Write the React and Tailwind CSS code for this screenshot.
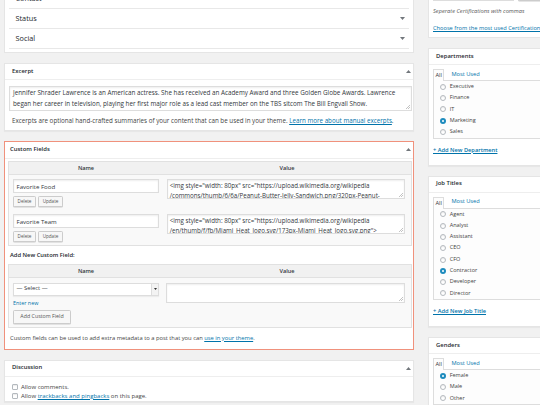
import React from "react";

// ---------- UTILS ----------
function cn(...classes) {
  return classes.filter(Boolean).join(" ");
}

// ---------- SMALL PIECES ----------
function Caret({ up }) {
  return (
    <svg width="5" height="3" viewBox="0 0 5 3" className="shrink-0">
      <path d={up ? "M0 3L2.5 0L5 3Z" : "M0 0L5 0L2.5 3Z"} fill="#72777c" />
    </svg>
  );
}

function Grip() {
  return (
    <svg className="absolute right-[1px] bottom-[1px]" width="5" height="5" viewBox="0 0 5 5">
      <path d="M5 1L1 5M5 3L3 5" stroke="#9a9a9a" strokeWidth="0.6" />
    </svg>
  );
}

function Radio({ checked }) {
  if (checked) {
    return (
      <span className="w-[6px] h-[6px] rounded-full bg-[#1e8cbe] flex items-center justify-center shrink-0">
        <span className="w-[2px] h-[2px] rounded-full bg-white" />
      </span>
    );
  }
  return (
    <span className="w-[6px] h-[6px] rounded-full border-[0.75px] border-[#b4b9be] bg-white shadow-[inset_0_1px_1px_rgba(0,0,0,0.08)] shrink-0" />
  );
}

function Checkbox() {
  return (
    <span className="w-[6px] h-[6px] rounded-[1px] border-[0.75px] border-[#b4b9be] bg-white shadow-[inset_0_1px_1px_rgba(0,0,0,0.08)] shrink-0" />
  );
}

function SmallButton({ className, children }) {
  return (
    <span
      className={cn(
        "flex items-center justify-center bg-[#f7f7f7] border-[0.75px] border-[#cccccc] rounded-[1.5px] shadow-[0_0.5px_0_#ccc] text-[#555] whitespace-nowrap",
        className
      )}
    >
      {children}
    </span>
  );
}

function Postbox({ title, className, headerClass, toggle = true, children }) {
  return (
    <div className={cn("bg-white border border-[#e5e5e5] shadow-[0_1px_1px_rgba(0,0,0,0.04)]", className)}>
      <div className={cn("h-[16px] border-b border-[#eeeeee] flex items-center justify-between pl-[7px] pr-[2px]", headerClass)}>
        <span className="text-[5.9px] font-semibold text-[#23282d] leading-none">{title}</span>
        {toggle && <Caret up />}
      </div>
      {children}
    </div>
  );
}

function TaxBox({ title, items, checked, addLabel }) {
  return (
    <Postbox title={title} toggle={false}>
      <div className="px-[4px] pt-[3px] pb-[10px]">
        <div className="flex items-end h-[12px]">
          <div className="relative top-px z-10 h-[12px] px-[1.5px] border-[0.75px] border-b-0 border-[#dddddd] bg-[#fdfdfd] text-[5.7px] leading-[11px] text-[#32373c]">
            All
          </div>
          <span className="ml-[7px] text-[5.7px] leading-[11px] text-[#0073aa] self-center">Most Used</span>
        </div>
        <div className="border-[0.75px] border-[#dddddd] bg-[#fdfdfd]">
          {items.map((it) => (
            <div key={it} className="h-[11.3px] flex items-center pl-[6px] gap-[3.7px]">
              <Radio checked={it === checked} />
              <span className="text-[5.5px] text-[#444] leading-none whitespace-nowrap">{it}</span>
            </div>
          ))}
        </div>
        <div className="mt-[7px] leading-[9px] text-[5.7px] font-semibold text-[#0073aa] underline whitespace-nowrap">
          {addLabel}
        </div>
      </div>
    </Postbox>
  );
}

// ---------- CUSTOM FIELD ROW ----------
function FieldRow({ name, lines }) {
  return (
    <div className="flex h-[35px] pt-[4px]">
      <div className="w-[154px] pl-[4px] shrink-0">
        <div className="h-[14px] w-[146px] bg-white border-[0.75px] border-[#dddddd] shadow-[inset_0_1px_2px_rgba(0,0,0,0.07)] text-[6.1px] text-[#32373c] leading-[13px] pl-[2.5px]">
          {name}
        </div>
        <div className="flex gap-[2px] mt-[3px]">
          <SmallButton className="w-[23px] h-[11px] text-[4.6px]">Delete</SmallButton>
          <SmallButton className="w-[25px] h-[11px] text-[4.6px]">Update</SmallButton>
        </div>
      </div>
      <div className="flex-1 pl-[3.7px] pr-[5.7px]">
        <div className="relative h-[20px] bg-white border-[0.75px] border-[#dddddd] shadow-[inset_0_1px_2px_rgba(0,0,0,0.07)] overflow-hidden pl-[2px] pt-[1px] text-[6.2px] leading-[10px] text-[#32373c]">
          {lines.map((l, i) => (
            <div key={i} className="whitespace-nowrap">{l}</div>
          ))}
          <Grip />
        </div>
      </div>
    </div>
  );
}

// ---------- MAIN ----------
export default function App() {
  return (
    <div className="w-[540px] h-[405px] overflow-hidden bg-[#f1f1f1] flex pl-[4px] font-['Open_Sans','Liberation_Sans',sans-serif] text-[#444]">
      {/* Left column */}
      <div className="w-[410px] shrink-0 flex flex-col gap-[10px]">
        {/* Accordion box */}
        <div className="-mt-[17px] bg-white border border-[#e5e5e5] px-[4px] pt-[4px] pb-[3px]">
          <div className="border-b border-[#e8e8e8]">
            {["Contact", "Status", "Social"].map((r) => (
              <div key={r} className="h-[20px] border-t border-[#e8e8e8] flex items-center justify-between pl-[6.5px] pr-[4px]">
                <span className="text-[7.3px] text-[#23282d] leading-none">{r}</span>
                <Caret />
              </div>
            ))}
          </div>
        </div>

        {/* Excerpt */}
        <Postbox title="Excerpt" headerClass="h-[15px]" className="pb-[5px]">
          <div className="pl-[4px] pr-[1px]">
            <div className="relative mt-[6px] h-[25px] bg-white border-[0.75px] border-[#dddddd] shadow-[inset_0_1px_2px_rgba(0,0,0,0.07)] pl-[3px] text-[6.3px] leading-[11.3px] text-[#32373c] overflow-hidden">
              <div className="whitespace-nowrap">
                Jennifer Shrader Lawrence is an American actress. She has received an Academy Award and three Golden Globe Awards. Lawrence
              </div>
              <div className="whitespace-nowrap">
                began her career in television, playing her first major role as a lead cast member on the TBS sitcom The Bill Engvall Show.
              </div>
              <Grip />
            </div>
            <p className="mt-[6px] text-[6.25px] leading-[8px] whitespace-nowrap pl-[3px]">
              Excerpts are optional hand-crafted summaries of your content that can be used in your theme.{" "}
              <span className="text-[#0073aa] underline">Learn more about manual excerpts</span>.
            </p>
          </div>
        </Postbox>

        {/* Custom Fields */}
        <div className="bg-white border border-[#f0917c] pb-[7px]">
          <div className="h-[16.5px] border-b border-[#eeeeee] flex items-center justify-between pl-[5px] pr-[2px]">
            <span className="text-[5.9px] font-semibold text-[#23282d] leading-none">Custom Fields</span>
            <Caret up />
          </div>
          <div className="ml-[3px] mr-[1px] mt-[2px] border-[0.75px] border-[#e1e1e1] bg-[#f9f9f9]">
            <div className="flex h-[13px] bg-[#f1f1f1] border-b-[0.75px] border-[#e1e1e1] text-[5.6px] font-semibold text-[#32373c] leading-[12px]">
              <div className="w-[154px] text-center shrink-0">Name</div>
              <div className="flex-1 text-center">Value</div>
            </div>
            <FieldRow
              name="Favorite Food"
              lines={[
                '<img style="width: 80px" src="https://upload.wikimedia.org/wikipedia',
                "/commons/thumb/6/6a/Peanut-Butter-Jelly-Sandwich.png/320px-Peanut-",
              ]}
            />
            <FieldRow
              name="Favorite Team"
              lines={[
                '<img style="width: 80px" src="https://upload.wikimedia.org/wikipedia',
                '/en/thumb/f/fb/Miami_Heat_logo.svg/173px-Miami_Heat_logo.svg.png">',
              ]}
            />
          </div>

          <div className="pl-[5px] mt-[5px] text-[5.8px] font-semibold text-[#23282d] leading-[9px]">
            Add New Custom Field:
          </div>

          <div className="ml-[3px] mr-[1px] mt-[4px] border-[0.75px] border-[#e1e1e1] bg-[#f9f9f9]">
            <div className="flex h-[13px] bg-[#f1f1f1] border-b-[0.75px] border-[#e1e1e1] text-[5.6px] font-semibold text-[#32373c] leading-[12px]">
              <div className="w-[154px] text-center shrink-0">Name</div>
              <div className="flex-1 text-center">Value</div>
            </div>
            <div className="flex pt-[5px] pb-[3.5px]">
              <div className="w-[154px] pl-[4px] shrink-0">
                <div className="h-[13px] w-[146px] bg-white border-[0.75px] border-[#dddddd] shadow-[0_1px_1px_rgba(0,0,0,0.05)] flex items-center justify-between">
                  <span className="pl-[2.5px] text-[5.9px] text-[#32373c] leading-none">— Select —</span>
                  <span className="h-full w-[7px] border-l-[0.75px] border-[#dddddd] bg-[#f3f3f3] flex items-center justify-center">
                    <svg width="3" height="2" viewBox="0 0 3 2">
                      <path d="M0 0L3 0L1.5 2Z" fill="#333" />
                    </svg>
                  </span>
                </div>
                <div className="mt-[3px] text-[5.4px] leading-[8px] text-[#0073aa]">Enter new</div>
                <SmallButton className="mt-[3.5px] w-[58px] h-[13.5px] text-[5.3px]">Add Custom Field</SmallButton>
              </div>
              <div className="flex-1 pl-[3px] pr-[5.7px]">
                <div className="relative h-[20.5px] bg-white border-[0.75px] border-[#dddddd] shadow-[inset_0_1px_2px_rgba(0,0,0,0.07)]">
                  <Grip />
                </div>
              </div>
            </div>
          </div>

          <p className="pl-[5px] mt-[5.5px] text-[5.8px] leading-[8px] whitespace-nowrap">
            Custom fields can be used to add extra metadata to a post that you can{" "}
            <span className="text-[#0073aa] underline">use in your theme</span>.
          </p>
        </div>

        {/* Discussion */}
        <Postbox title="Discussion">
          <div className="pl-[6.5px] pt-[5.5px]">
            <div className="flex items-center gap-[3.5px] h-[9.3px]">
              <Checkbox />
              <span className="text-[6px] leading-none">Allow comments.</span>
            </div>
            <div className="flex items-center gap-[3.5px] h-[9.3px]">
              <Checkbox />
              <span className="text-[6px] leading-none whitespace-nowrap">
                Allow <span className="text-[#0073aa] underline">trackbacks and pingbacks</span> on this page.
              </span>
            </div>
          </div>
        </Postbox>
      </div>

      {/* Right column */}
      <div className="ml-[14px] w-[130px] shrink-0 flex flex-col gap-[10px]">
        <div className="-mt-[23px] bg-white border border-[#e5e5e5] px-[4px] pt-[9px] pb-[5.5px]">
          <div className="flex h-[14px] gap-[4px]">
            <div className="w-[81px] bg-white border-[0.75px] border-[#dddddd] shadow-[inset_0_1px_2px_rgba(0,0,0,0.07)]" />
            <SmallButton className="w-[26px] h-[14px] text-[5px]">Add</SmallButton>
          </div>
          <p className="mt-[5.7px] text-[5.7px] italic leading-[8px] text-[#555] whitespace-nowrap">
            Seperate Certifications with commas
          </p>
          <p className="mt-[9px] text-[5.7px] leading-[8px] text-[#0073aa] underline whitespace-nowrap">
            Choose from the most used Certifications
          </p>
        </div>

        <TaxBox
          title="Departments"
          items={["Executive", "Finance", "IT", "Marketing", "Sales"]}
          checked="Marketing"
          addLabel="+ Add New Department"
        />
        <TaxBox
          title="Job Titles"
          items={["Agent", "Analyst", "Assistant", "CEO", "CFO", "Contractor", "Developer", "Director"]}
          checked="Contractor"
          addLabel="+ Add New Job Title"
        />
        <TaxBox
          title="Genders"
          items={["Female", "Male", "Other"]}
          checked="Female"
          addLabel="+ Add New Gender"
        />
      </div>
    </div>
  );
}
